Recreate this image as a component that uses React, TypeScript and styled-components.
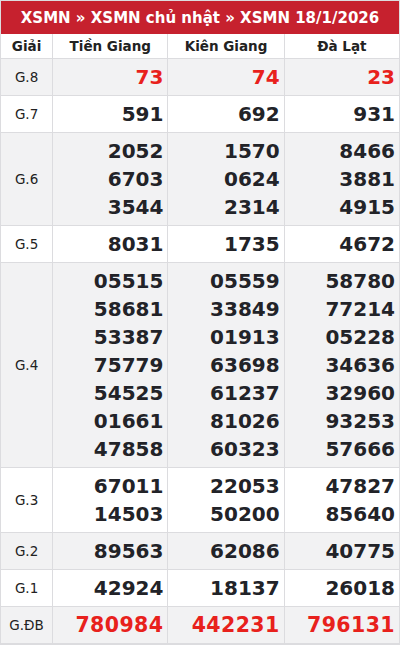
import React from 'react';
import styled, { createGlobalStyle } from 'styled-components';

type Row = {
  label: string;
  values: string[][];
  tone?: 'red' | 'jackpot';
};

const provinces = ['Tiền Giang', 'Kiên Giang', 'Đà Lạt'];

const rows: Row[] = [
  { label: 'G.8', values: [['73'], ['74'], ['23']], tone: 'red' },
  { label: 'G.7', values: [['591'], ['692'], ['931']] },
  {
    label: 'G.6',
    values: [
      ['2052', '6703', '3544'],
      ['1570', '0624', '2314'],
      ['8466', '3881', '4915'],
    ],
  },
  { label: 'G.5', values: [['8031'], ['1735'], ['4672']] },
  {
    label: 'G.4',
    values: [
      ['05515', '58681', '53387', '75779', '54525', '01661', '47858'],
      ['05559', '33849', '01913', '63698', '61237', '81026', '60323'],
      ['58780', '77214', '05228', '34636', '32960', '93253', '57666'],
    ],
  },
  {
    label: 'G.3',
    values: [
      ['67011', '14503'],
      ['22053', '50200'],
      ['47827', '85640'],
    ],
  },
  { label: 'G.2', values: [['89563'], ['62086'], ['40775']] },
  { label: 'G.1', values: [['42924'], ['18137'], ['26018']] },
  { label: 'G.ĐB', values: [['780984'], ['442231'], ['796131']], tone: 'jackpot' },
];

const GlobalStyle = createGlobalStyle`
  body {
    margin: 0;
    background: #ffffff;
    font-family: 'DejaVu Sans', Verdana, sans-serif;
  }
`;

const Wrapper = styled.div`
  width: 400px;
`;

const Table = styled.table`
  width: 400px;
  border-collapse: collapse;
  table-layout: fixed;
  border: 1px solid #dcdcdf;
  border-bottom-width: 2px;
`;

const Col = styled.col<{ w: number }>`
  width: ${({ w }) => w}px;
`;

const Title = styled.th`
  background: #c6212e;
  color: #ffffff;
  font-size: 15px;
  font-weight: bold;
  height: 33px;
  padding: 0;
  text-align: center;
`;

const HeadCell = styled.th`
  height: 24px;
  padding: 0;
  font-size: 13.5px;
  font-weight: bold;
  color: #222222;
  text-align: center;
  border: 1px solid #dcdcdf;
  border-top: none;
`;

const BodyRow = styled.tr<{ shaded: boolean }>`
  background: ${({ shaded }) => (shaded ? '#f2f2f3' : '#ffffff')};
`;

const LabelCell = styled.td`
  padding: 0;
  font-size: 13.5px;
  color: #222222;
  text-align: center;
  border: 1px solid #dcdcdf;
`;

const NumCell = styled.td`
  padding: 4px 4px 4px 0;
  text-align: right;
  border: 1px solid #dcdcdf;
`;

const Num = styled.div<{ tone?: 'red' | 'jackpot' }>`
  font-size: ${({ tone }) => (tone === 'jackpot' ? '20.5px' : '20px')};
  letter-spacing: ${({ tone }) => (tone === 'jackpot' ? '0.4px' : '0')};
  line-height: 28px;
  font-weight: bold;
  color: ${({ tone }) => (tone ? '#e8211c' : '#222328')};
`;

export default function App() {
  return (
    <Wrapper>
      <GlobalStyle />
      <Table>
        <colgroup>
          <Col w={52} />
          <Col w={115} />
          <Col w={116} />
          <Col w={115} />
        </colgroup>
        <thead>
          <tr>
            <Title colSpan={4}>XSMN » XSMN chủ nhật » XSMN 18/1/2026</Title>
          </tr>
          <tr>
            <HeadCell>Giải</HeadCell>
            {provinces.map((p) => (
              <HeadCell key={p}>{p}</HeadCell>
            ))}
          </tr>
        </thead>
        <tbody>
          {rows.map((row, i) => (
            <BodyRow key={row.label} shaded={i % 2 === 0}>
              <LabelCell>{row.label}</LabelCell>
              {row.values.map((col, j) => (
                <NumCell key={j}>
                  {col.map((n, k) => (
                    <Num key={k} tone={row.tone}>
                      {n}
                    </Num>
                  ))}
                </NumCell>
              ))}
            </BodyRow>
          ))}
        </tbody>
      </Table>
    </Wrapper>
  );
}
